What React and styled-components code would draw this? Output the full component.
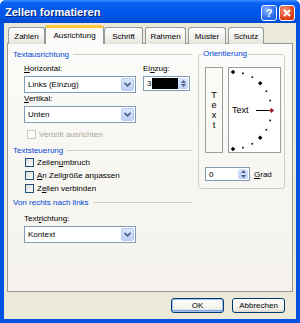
import React from "react";
import styled, { createGlobalStyle, css } from "styled-components";

const GlobalStyle = createGlobalStyle`
  html, body {
    margin: 0;
    padding: 0;
    background: #ffffff;
  }
  body {
    font-family: "Liberation Sans", Arial, sans-serif;
    font-size: 8px;
    color: #000000;
  }
`;

const Window = styled.div`
  width: 300px;
  height: 323px;
  box-sizing: border-box;
  display: flex;
  flex-direction: column;
  background: #0054e3;
  border-radius: 6px 6px 0 0;
  overflow: hidden;
`;

const TitleBar = styled.div`
  height: 23px;
  flex: none;
  display: flex;
  align-items: center;
  justify-content: space-between;
  padding: 0 5px 0 5px;
  background: linear-gradient(
    #3b8cff 0%,
    #0a62f4 12%,
    #0058ee 40%,
    #0054e3 75%,
    #0049d0 100%
  );
`;

const Title = styled.div`
  font-weight: bold;
  font-size: 11px;
  color: #ffffff;
  text-shadow: 1px 1px 0 #0a1f7a;
`;

const TitleButtons = styled.div`
  display: flex;
  gap: 2px;
  margin-top: 3px;
`;

const TitleButton = styled.div`
  width: 14px;
  height: 14px;
  border: 1px solid #ffffff;
  border-radius: 3px;
  display: flex;
  align-items: center;
  justify-content: center;
  color: #ffffff;
  font-weight: bold;
  font-size: 11px;
  ${(p) =>
    p.$close
      ? css`
          background: radial-gradient(circle at 35% 30%, #f39a7c, #e0451c 60%, #c23210);
        `
      : css`
          background: radial-gradient(circle at 35% 30%, #8bb6ff, #2d6ff0 60%, #1a52d8);
        `}
`;

const Body = styled.div`
  flex: 1;
  margin: 0 4px 4px;
  background: #ece9d8;
  padding: 2px 3px 0;
  display: flex;
  flex-direction: column;
`;

const Tabs = styled.div`
  display: flex;
  align-items: flex-end;
  height: 19px;
  padding-left: 1px;
  margin-bottom: -1px;
  position: relative;
  z-index: 1;
`;

const Tab = styled.div`
  box-sizing: border-box;
  width: ${(p) => p.$w}px;
  height: 17px;
  margin-right: 2px;
  display: flex;
  align-items: center;
  justify-content: center;
  border: 1px solid #919b9c;
  border-bottom: none;
  border-radius: 3px 3px 0 0;
  background: linear-gradient(#ffffff, #f0efe9 70%, #e6e4da);
  ${(p) =>
    p.$active &&
    css`
      height: 19px;
      margin: 0 0 0 -2px;
      border-top: 3px solid #ffc83c;
      background: #fbfbf9;
      padding-bottom: 1px;
    `}
`;

const Panel = styled.div`
  box-sizing: border-box;
  height: 249px;
  border: 1px solid #919b9c;
  background: linear-gradient(#fbfbf9, #f4f2eb);
  padding: 5px 0 0 5px;
  display: flex;
`;

const LeftCol = styled.div`
  width: 179px;
  display: flex;
  flex-direction: column;
`;

const GroupHeader = styled.div`
  height: 10px;
  display: flex;
  align-items: center;
  gap: 4px;
  color: #0046d5;
  margin-top: ${(p) => p.$mt || 0}px;
  &::after {
    content: "";
    flex: 1;
    height: 1px;
    background: #d0d0bf;
  }
`;

const FieldRow = styled.div`
  display: flex;
  gap: 7px;
  padding-left: 11px;
  margin-top: ${(p) => p.$mt || 0}px;
`;

const Field = styled.div`
  display: flex;
  flex-direction: column;
  gap: 2px;
`;

const Label = styled.div`
  height: 10px;
  line-height: 10px;
  white-space: nowrap;
  color: ${(p) => (p.$disabled ? "#aca899" : "#000000")};
`;

const Combo = styled.div`
  box-sizing: border-box;
  width: ${(p) => p.$w}px;
  height: 17px;
  border: 1px solid #7f9db9;
  background: #ffffff;
  display: flex;
  align-items: center;
  padding: 1px 1px 1px 3px;
`;

const ComboText = styled.div`
  flex: 1;
  white-space: nowrap;
`;

const DropButton = styled.div`
  width: 13px;
  height: 13px;
  border-radius: 2px;
  border: 1px solid #b7cbf3;
  box-sizing: border-box;
  background: linear-gradient(#dbe7fe, #bcd0f8);
  display: flex;
  align-items: center;
  justify-content: center;
`;

const Spin = styled.div`
  box-sizing: border-box;
  width: ${(p) => p.$w}px;
  height: ${(p) => p.$h}px;
  margin-top: ${(p) => p.$mt || 0}px;
  border: 1px solid #7f9db9;
  background: #ffffff;
  display: flex;
  align-items: stretch;
  padding: 1px;
`;

const SpinValue = styled.div`
  flex: 1;
  display: flex;
  align-items: center;
  padding-left: 2px;
`;

const Selection = styled.div`
  flex: 1;
  align-self: stretch;
  background: #000000;
  margin-left: 1px;
`;

const SpinButtons = styled.div`
  width: 10px;
  border-radius: 2px;
  background: linear-gradient(#dbe7fe, #bcd0f8);
  display: flex;
  flex-direction: column;
  align-items: center;
  justify-content: space-evenly;
`;

const CheckRow = styled.div`
  height: 12px;
  display: flex;
  align-items: center;
  gap: 3px;
  padding-left: ${(p) => p.$indent || 12}px;
  margin-top: ${(p) => p.$mt || 0}px;
  color: ${(p) => (p.$disabled ? "#aca899" : "#000000")};
`;

const Box = styled.div`
  box-sizing: border-box;
  width: 9px;
  height: 9px;
  border: 1px solid ${(p) => (p.$disabled ? "#cac8bb" : "#1c5180")};
  background: ${(p) =>
    p.$disabled ? "#ffffff" : "linear-gradient(135deg, #dcdcd7, #ffffff)"};
`;

const Orientation = styled.fieldset`
  box-sizing: border-box;
  width: 87px;
  height: 140px;
  margin: 0 0 0 6px;
  padding: 0 3px 0 6px;
  border: 1px solid #d0d0bf;
  border-radius: 3px;
  display: flex;
  flex-direction: column;
`;

const Legend = styled.legend`
  color: #0046d5;
  line-height: 10px;
  padding: 0 1px;
  margin-left: -3px;
`;

const DialRow = styled.div`
  display: flex;
  gap: 5px;
  margin-top: 8px;
`;

const VerticalText = styled.div`
  box-sizing: border-box;
  width: 18px;
  height: 86px;
  border: 1px solid #9d9d9a;
  display: flex;
  flex-direction: column;
  align-items: center;
  justify-content: center;
  line-height: 10px;
  font-size: 9px;
`;

const Dial = styled.div`
  box-sizing: border-box;
  width: 53px;
  height: 86px;
  border: 1px solid #9d9d9a;
  background: #ffffff;
  position: relative;
`;

const DialLabel = styled.div`
  position: absolute;
  left: 3px;
  top: 37px;
  font-size: 9px;
  line-height: 10px;
`;

const DegreeRow = styled.div`
  display: flex;
  align-items: center;
  gap: 4px;
  margin-top: 14px;
`;

const Footer = styled.div`
  display: flex;
  justify-content: flex-end;
  gap: 8px;
  padding: 6px 8px 0 0;
`;

const Button = styled.div`
  box-sizing: border-box;
  width: 53px;
  height: 15px;
  border: 1px solid #003c74;
  border-radius: 3px;
  background: linear-gradient(#ffffff, #f3f2ec 70%, #dcd9cd);
  display: flex;
  align-items: center;
  justify-content: center;
  ${(p) =>
    p.$default &&
    css`
      box-shadow: inset 0 0 0 1px #a6c0f0, inset 0 -1px 0 1px #7da2e8;
    `}
`;

const U = styled.span`
  text-decoration: underline;
`;

const Chevron = () => (
  <svg width="7" height="5" viewBox="0 0 7 5">
    <path d="M0.5 0.8 L3.5 3.8 L6.5 0.8" fill="none" stroke="#4d6185" strokeWidth="1.6" />
  </svg>
);

const Arrow = ({ up }) => (
  <svg width="5" height="3" viewBox="0 0 5 3">
    <path d={up ? "M0 3 L2.5 0 L5 3 Z" : "M0 0 L2.5 3 L5 0 Z"} fill="#4d6185" />
  </svg>
);

const DropDown = ({ w, children }) => (
  <Combo $w={w}>
    <ComboText>{children}</ComboText>
    <DropButton>
      <Chevron />
    </DropButton>
  </Combo>
);

const SpinBox = ({ w, h, mt, value, selected }) => (
  <Spin $w={w} $h={h} $mt={mt}>
    <SpinValue>
      {value}
      {selected && <Selection />}
    </SpinValue>
    <SpinButtons>
      <Arrow up />
      <Arrow />
    </SpinButtons>
  </Spin>
);

const Check = ({ children, disabled, indent, mt }) => (
  <CheckRow $disabled={disabled} $indent={indent} $mt={mt}>
    <Box $disabled={disabled} />
    <span>{children}</span>
  </CheckRow>
);

// dots on the orientation arc, every 15 degrees
const dialDots = () => {
  const cx = 4;
  const cy = 42.5;
  const r = 38.5;
  const items = [];
  for (let a = 90; a >= -90; a -= 15) {
    const rad = (a * Math.PI) / 180;
    const x = cx + r * Math.cos(rad);
    const y = cy - r * Math.sin(rad);
    if (a === 0) {
      items.push(
        <path
          key={a}
          d={`M${x} ${y - 2.5} L${x + 2.5} ${y} L${x} ${y + 2.5} L${x - 2.5} ${y} Z`}
          fill="#a0202a"
        />
      );
    } else if (a % 45 === 0) {
      items.push(
        <path
          key={a}
          d={`M${x} ${y - 2.2} L${x + 2.2} ${y} L${x} ${y + 2.2} L${x - 2.2} ${y} Z`}
          fill="#000000"
        />
      );
    } else {
      items.push(<rect key={a} x={x - 0.8} y={y - 0.8} width="1.6" height="1.6" fill="#000000" />);
    }
  }
  return items;
};

const tabs = [
  { name: "Zahlen", w: 37 },
  { name: "Ausrichtung", w: 59, active: true },
  { name: "Schrift", w: 39 },
  { name: "Rahmen", w: 41 },
  { name: "Muster", w: 38 },
  { name: "Schutz", w: 36 },
];

export default function App() {
  return (
    <>
      <GlobalStyle />
      <Window>
        <TitleBar>
          <Title>Zellen formatieren</Title>
          <TitleButtons>
            <TitleButton>?</TitleButton>
            <TitleButton $close>
              <svg width="8" height="8" viewBox="0 0 8 8">
                <path d="M1 1 L7 7 M7 1 L1 7" stroke="#ffffff" strokeWidth="1.8" />
              </svg>
            </TitleButton>
          </TitleButtons>
        </TitleBar>
        <Body>
          <Tabs>
            {tabs.map((t) => (
              <Tab key={t.name} $w={t.w} $active={t.active}>
                {t.name}
              </Tab>
            ))}
          </Tabs>
          <Panel>
            <LeftCol>
              <GroupHeader>Textausrichtung</GroupHeader>
              <FieldRow $mt={5}>
                <Field>
                  <Label>
                    <U>H</U>orizontal:
                  </Label>
                  <DropDown w={112}>Links (Einzug)</DropDown>
                </Field>
                <Field>
                  <Label>
                    Ei<U>n</U>zug:
                  </Label>
                  <SpinBox w={47} h={15} value="3" selected />
                </Field>
              </FieldRow>
              <FieldRow $mt={1}>
                <Field>
                  <Label>
                    <U>V</U>ertikal:
                  </Label>
                  <DropDown w={112}>Unten</DropDown>
                </Field>
              </FieldRow>
              <Check disabled indent={14} mt={5}>
                Verteilt ausrichten
              </Check>
              <GroupHeader $mt={5}>Textsteuerung</GroupHeader>
              <Check mt={1}>
                Zeilen<U>u</U>mbruch
              </Check>
              <Check mt={1}>
                <U>A</U>n Zellgröße anpassen
              </Check>
              <Check mt={1}>
                Z<U>e</U>llen verbinden
              </Check>
              <GroupHeader $mt={3}>Von rechts nach links</GroupHeader>
              <FieldRow $mt={7}>
                <Field>
                  <Label>
                    Text<U>r</U>ichtung:
                  </Label>
                  <DropDown w={112}>Kontext</DropDown>
                </Field>
              </FieldRow>
            </LeftCol>
            <Orientation>
              <Legend>Orientierung</Legend>
              <DialRow>
                <VerticalText>
                  <span>T</span>
                  <span>e</span>
                  <span>x</span>
                  <span>t</span>
                </VerticalText>
                <Dial>
                  <svg width="51" height="84" viewBox="0 0 51 84">
                    <line x1="27" y1="42.5" x2="40" y2="42.5" stroke="#000000" strokeWidth="1" />
                    {dialDots()}
                  </svg>
                  <DialLabel>Text</DialLabel>
                </Dial>
              </DialRow>
              <DegreeRow>
                <SpinBox w={45} h={14} value="0" />
                <span>
                  <U>G</U>rad
                </span>
              </DegreeRow>
            </Orientation>
          </Panel>
          <Footer>
            <Button $default>OK</Button>
            <Button>Abbrechen</Button>
          </Footer>
        </Body>
      </Window>
    </>
  );
}
